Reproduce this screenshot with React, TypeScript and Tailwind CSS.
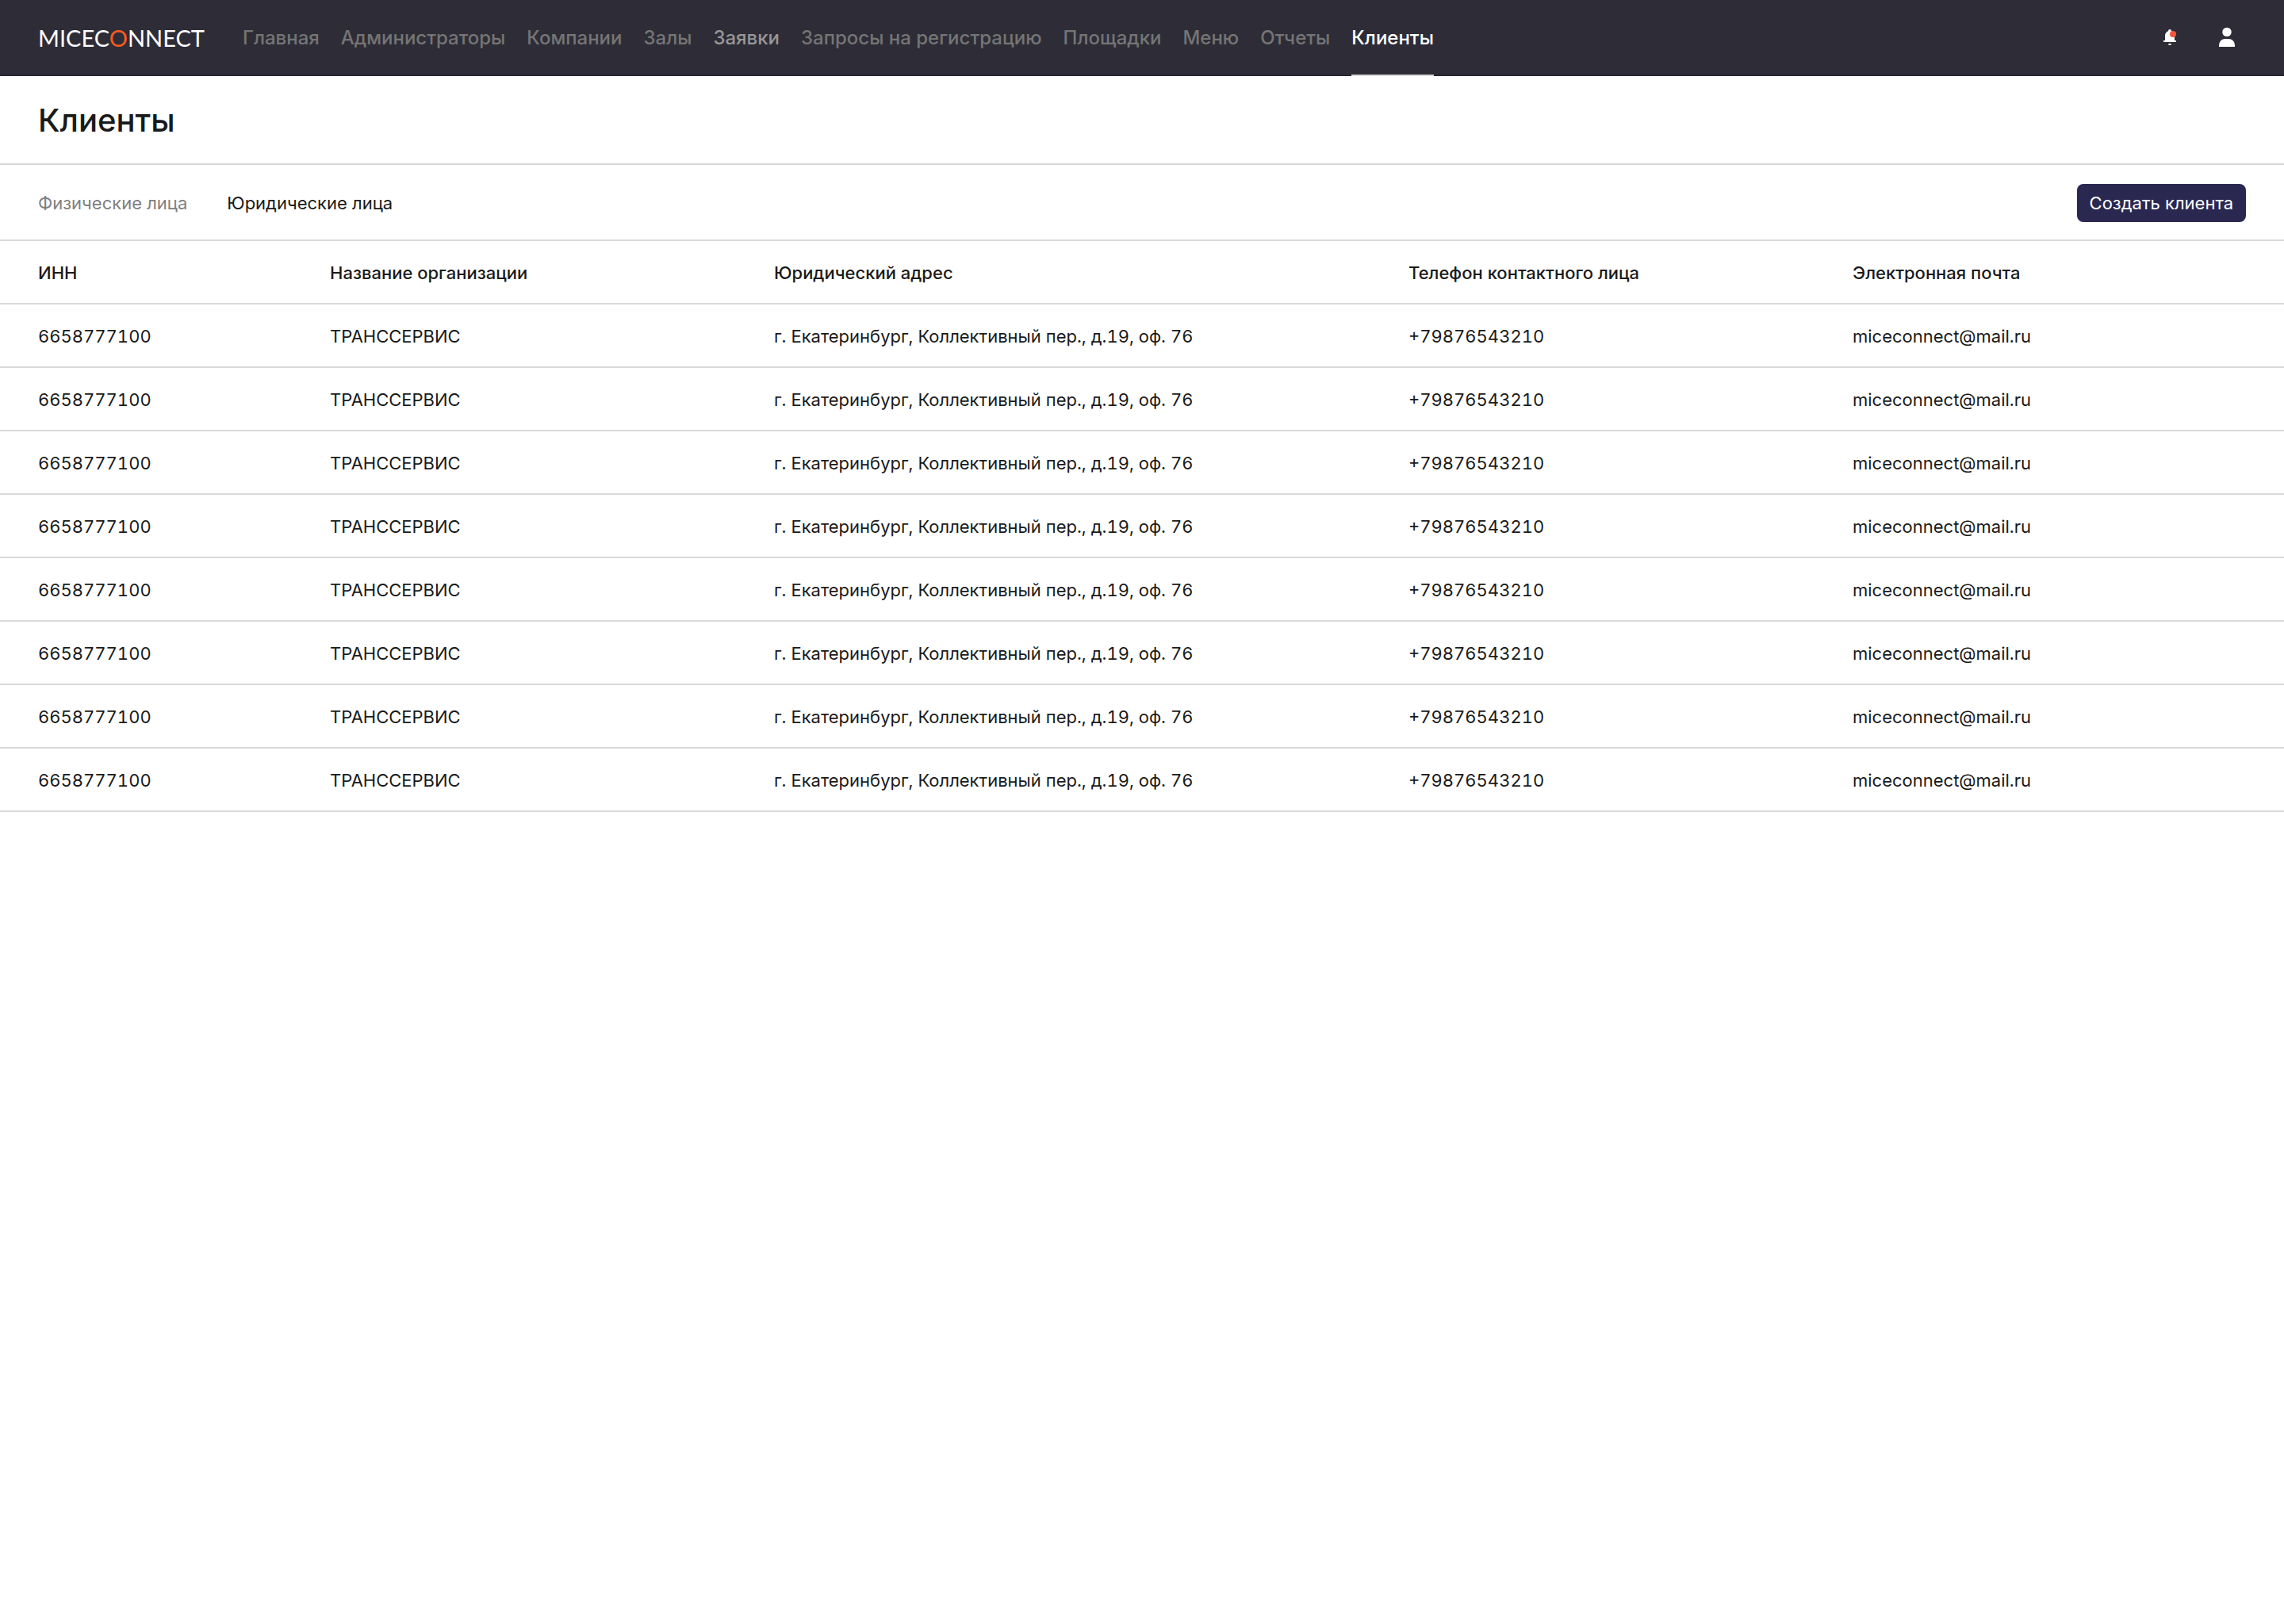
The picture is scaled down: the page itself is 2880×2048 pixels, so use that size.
const nav = [
  { label: "Главная", tone: "text-[#757575]" },
  { label: "Администраторы", tone: "text-[#757575]" },
  { label: "Компании", tone: "text-[#757575]" },
  { label: "Залы", tone: "text-[#757575]" },
  { label: "Заявки", tone: "text-[#979797]" },
  { label: "Запросы на регистрацию", tone: "text-[#757575]" },
  { label: "Площадки", tone: "text-[#757575]" },
  { label: "Меню", tone: "text-[#757575]" },
  { label: "Отчеты", tone: "text-[#757575]" },
];

const columns = [
  { label: "ИНН", width: "w-13/90 pl-12" },
  { label: "Название организации", width: "w-7/36" },
  { label: "Юридический адрес", width: "w-5/18" },
  { label: "Телефон контактного лица", width: "w-7/36" },
  { label: "Электронная почта", width: "" },
];

const client = {
  inn: "6658777100",
  name: "ТРАНССЕРВИС",
  address: "г. Екатеринбург, Коллективный пер., д.19, оф. 76",
  phone: "+79876543210",
  email: "miceconnect@mail.ru",
};
const clients = Array.from({ length: 8 }, (_, id) => ({ id, ...client }));

function BellIcon() {
  return (
    <svg viewBox="0 0 24 24" className="size-6" aria-hidden="true">
      <path
        fill="#fff"
        d="M12 1a2 2 0 0 1 2 2v.3c2.500.8 4 3 4 5.700v6h2v2H4v-2h2V9c0-2.700 1.500-4.900 4-5.700V3a2 2 0 0 1 2-2ZM10 19h4a2 2 0 0 1-4 0Z"
      />
      <circle cx="16" cy="7" r="4" fill="#f4583e" />
    </svg>
  );
}

function UserIcon() {
  return (
    <svg viewBox="0 0 32 32" className="size-8" aria-hidden="true">
      <circle cx="16" cy="8.400" r="5.700" fill="#fff" />
      <path fill="#fff" d="M6 27v-1.500c0-5 3.500-8.500 7.500-8.500h5c4 0 7.500 3.500 7.500 8.500V27Z" />
    </svg>
  );
}

export default function App() {
  return (
    <div className="min-h-screen bg-white font-['Inter',sans-serif] text-[22px] leading-8 text-[#1a1a1a]">
      <header className="flex h-24 items-center bg-[#2e2d37] px-12 shadow-[inset_0_-2px_#272330]">
        <a href="#" className="mr-12 font-['Lato',sans-serif] text-[29px] leading-8 text-white">
          MICEC<span className="text-[#ff5a1f]">O</span>NNECT
        </a>
        <nav className="flex gap-[27px] self-stretch text-2xl font-medium">
          {nav.map((item) => (
            <a key={item.label} href="#" className={`flex items-center whitespace-nowrap ${item.tone}`}>
              {item.label}
            </a>
          ))}
          <a
            href="#"
            aria-current="page"
            className="flex items-center text-white shadow-[inset_0_-2px_#d9d9d9]"
          >
            Клиенты
          </a>
        </nav>
        <div className="ml-auto flex items-center gap-11 pr-2">
          <button type="button" aria-label="Уведомления">
            <BellIcon />
          </button>
          <button type="button" aria-label="Профиль">
            <UserIcon />
          </button>
        </div>
      </header>

      <main>
        <div className="flex h-28 items-center px-12 shadow-[inset_0_-2px_#d9d9d9]">
          <h1 className="text-[40px] font-medium leading-12">Клиенты</h1>
        </div>

        <div className="flex h-24 items-center justify-between px-12 shadow-[inset_0_-2px_#d9d9d9]">
          <div className="flex gap-[50px]">
            <a href="#" className="text-[#808080]">
              Физические лица
            </a>
            <a href="#" aria-current="page">
              Юридические лица
            </a>
          </div>
          <button type="button" className="h-12 rounded-lg bg-[#2a2850] px-4 text-white">
            Создать клиента
          </button>
        </div>

        <table className="w-full table-fixed text-left">
          <thead>
            <tr className="h-20 shadow-[inset_0_-2px_#d9d9d9]">
              {columns.map((column) => (
                <th key={column.label} scope="col" className={`font-medium ${column.width}`}>
                  {column.label}
                </th>
              ))}
            </tr>
          </thead>
          <tbody className="tabular-nums">
            {clients.map((row) => (
              <tr key={row.id} className="h-20 shadow-[inset_0_-2px_#d9d9d9]">
                <td className="pl-12">{row.inn}</td>
                <td>{row.name}</td>
                <td>{row.address}</td>
                <td>{row.phone}</td>
                <td>{row.email}</td>
              </tr>
            ))}
          </tbody>
        </table>
      </main>
    </div>
  );
}
